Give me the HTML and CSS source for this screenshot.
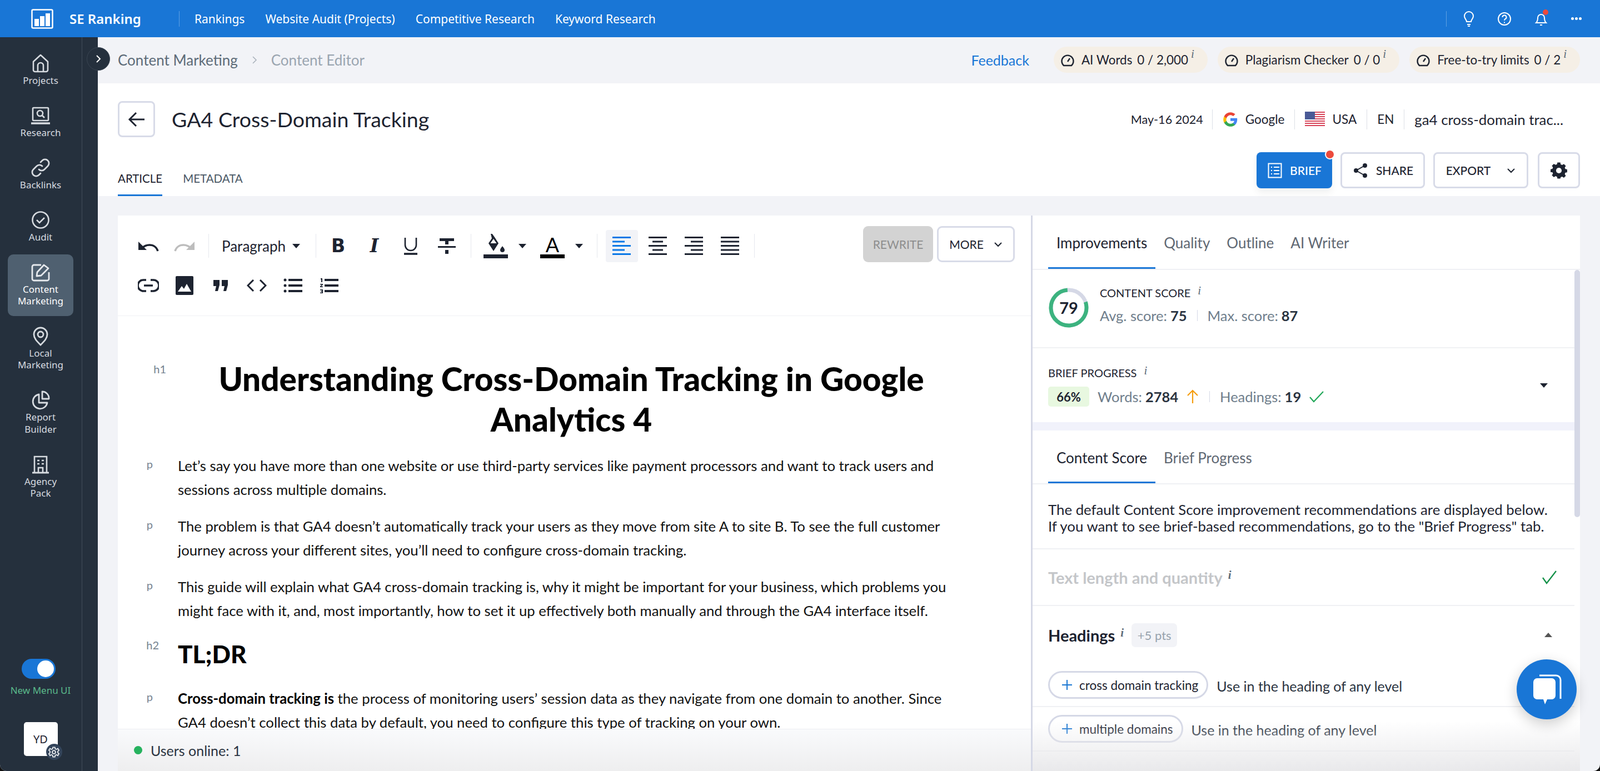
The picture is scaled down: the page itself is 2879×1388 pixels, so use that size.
FILE: index.html
```html
<!DOCTYPE html>
<html>
    <head>
        <title>Content Editor</title>
        <link rel="stylesheet" href="styles.css">
    </head>
    <body>
        <div class="app">

            <header class="topbar">
                <div class="logo">
                    <svg width="40" height="36" viewBox="0 0 40 36"><rect x="1.5" y="1.5" width="37" height="33" rx="2" fill="none" stroke="#fff" stroke-width="2.5"/><rect x="6" y="18" width="8" height="13" fill="#fff"/><rect x="16" y="13" width="8" height="18" fill="#fff"/><rect x="26" y="8" width="8" height="23" fill="#fff"/></svg>
                    <span class="brand">SE Ranking</span>
                </div>
                <nav class="topnav">
                    <a>Rankings</a>
                    <a>Website Audit (Projects)</a>
                    <a>Competitive Research</a>
                    <a>Keyword Research</a>
                </nav>
                <div class="topicons">
                    <svg width="26" height="30" viewBox="0 0 26 30" fill="none" stroke="#fff" stroke-width="2"><path d="M9 20c0-4-4-5-4-10a8 8 0 0 1 16 0c0 5-4 6-4 10z"/><path d="M10 25h6M11 28h4"/></svg>
                    <svg width="30" height="30" viewBox="0 0 30 30" fill="none" stroke="#fff" stroke-width="2"><circle cx="15" cy="15" r="11"/><path d="M11.5 12a3.5 3.5 0 1 1 5 3.2c-1 .6-1.5 1.2-1.5 2.6"/><path d="M15 20.5v2"/></svg>
                    <span class="bell">
                        <svg width="30" height="30" viewBox="0 0 30 30" fill="none" stroke="#fff" stroke-width="2"><path d="M6 22c2-2 3-4 3-9a6 6 0 0 1 12 0c0 5 1 7 3 9z"/><path d="M13 26h4"/></svg>
                    </span>
                    <span class="dots"><i></i><i></i><i></i></span>
                </div>
            </header>

            <div class="shell">
                <aside class="sidebar">
                    <button class="collapse">
                        <svg width="12" height="18" viewBox="0 0 12 18" fill="none" stroke="#fff" stroke-width="2"><path d="M3 3l6 6-6 6"/></svg>
                    </button>
                    <div class="rail">
                        <a class="railitem">
                            <svg width="40" height="40" viewBox="0 0 40 40" fill="none" stroke="#d7dbe0" stroke-width="2.6" stroke-linejoin="round"><path d="M7 17L20 5l13 12v15a3 3 0 0 1-3 3H10a3 3 0 0 1-3-3z"/><path d="M15 35V24a5 5 0 0 1 10 0v11"/></svg>
                            <span>Projects</span>
                        </a>
                        <a class="railitem">
                            <svg width="40" height="40" viewBox="0 0 40 40" fill="none" stroke="#d7dbe0" stroke-width="2.6"><rect x="6" y="6" width="28" height="23" rx="1.5"/><circle cx="19" cy="16" r="5"/><path d="M23 20l4 4"/><path d="M3 34h34" stroke-width="3.4"/></svg>
                            <span>Research</span>
                        </a>
                        <a class="railitem">
                            <svg width="40" height="40" viewBox="0 0 40 40" fill="none" stroke="#d7dbe0" stroke-width="2.8" stroke-linecap="round"><path d="M17 23a7 7 0 0 0 10 0l6-6a7 7 0 0 0-10-10l-3 3"/><path d="M23 17a7 7 0 0 0-10 0l-6 6a7 7 0 0 0 10 10l3-3"/></svg>
                            <span>Backlinks</span>
                        </a>
                        <a class="railitem">
                            <svg width="40" height="40" viewBox="0 0 40 40" fill="none" stroke="#d7dbe0" stroke-width="2.6"><circle cx="20" cy="20" r="14.5"/><path d="M13 20l5 5 9-9"/></svg>
                            <span>Audit</span>
                        </a>
                        <a class="railitem active">
                            <svg width="40" height="40" viewBox="0 0 40 40" fill="none" stroke="#e6e9ed" stroke-width="2.8" stroke-linejoin="round"><path d="M21 7H8a3 3 0 0 0-3 3v22a3 3 0 0 0 3 3h24a3 3 0 0 0 3-3V20"/><path d="M13 27l1-7L26 7l8 6-13 13z"/></svg>
                            <span>Content<br>Marketing</span>
                        </a>
                        <a class="railitem">
                            <svg width="40" height="40" viewBox="0 0 40 40" fill="none" stroke="#d7dbe0" stroke-width="2.8"><path d="M20 36C13 29 8 24 8 17a12 12 0 0 1 24 0c0 7-5 12-12 19z"/><circle cx="20" cy="17" r="5"/></svg>
                            <span>Local<br>Marketing</span>
                        </a>
                        <a class="railitem">
                            <svg width="40" height="40" viewBox="0 0 40 40" fill="none" stroke="#d7dbe0" stroke-width="2.8" stroke-linejoin="round"><path d="M17 10a13 13 0 1 0 15 15H17z"/><path d="M23 5a12 12 0 0 1 12 13H23z"/></svg>
                            <span>Report<br>Builder</span>
                        </a>
                        <a class="railitem">
                            <svg width="40" height="40" viewBox="0 0 40 40" fill="none" stroke="#d7dbe0" stroke-width="2.6"><path d="M9 35V6h22v29"/><path d="M5 35h30" stroke-width="3"/><path d="M16 35v-9h8v9"/><path d="M14 13h4M22 13h4M14 19h4M22 19h4"/></svg>
                            <span>Agency<br>Pack</span>
                        </a>
                    </div>
                    <div class="railbottom">
                        <div class="toggle"><i></i></div>
                        <div class="togglelabel">New Menu UI</div>
                        <div class="avatar">
                            YD
                            <span class="avatargear">
                                <svg width="22" height="22" viewBox="0 0 24 24" fill="none" stroke="#e6e9ed" stroke-width="2"><circle cx="12" cy="12" r="3.2"/><path d="M10 2.5h4l.6 3 2.5 1.1 2.6-1.6 2.2 3.4-2.3 2 .1 2.9 2.2 2-2.2 3.4-2.6-1.6-2.5 1.2-.6 3.1h-4l-.6-3.1-2.5-1.2-2.6 1.6-2.2-3.4 2.2-2 .1-2.9-2.3-2L4.3 5l2.6 1.6 2.5-1.1z"/></svg>
                            </span>
                        </div>
                    </div>
                </aside>

                <main class="main">
                    <div class="subbar">
                        <div class="crumbs">
                            <span class="crumb">Content Marketing</span>
                            <svg width="12" height="18" viewBox="0 0 12 18" fill="none" stroke="#a9b2bb" stroke-width="1.6"><path d="M3 3l6 6-6 6"/></svg>
                            <span class="crumb last">Content Editor</span>
                        </div>
                        <div class="limits">
                            <a class="feedback">Feedback</a>
                            <div class="pill">
                                <svg class="gauge" width="24" height="24" viewBox="0 0 24 24" fill="none" stroke="#1d2330" stroke-width="2.4"><path d="M5 22a10.500 10.500 0 1 1 14 0z"/><path d="M12 15l4-6"/></svg>
                                <span>AI Words</span><span class="nums">0 / 2,000</span><i class="inf">i</i>
                            </div>
                            <div class="pill">
                                <svg class="gauge" width="24" height="24" viewBox="0 0 24 24" fill="none" stroke="#1d2330" stroke-width="2.4"><path d="M5 22a10.500 10.500 0 1 1 14 0z"/><path d="M12 15l4-6"/></svg>
                                <span>Plagiarism Checker</span><span class="nums">0 / 0</span><i class="inf">i</i>
                            </div>
                            <div class="pill">
                                <svg class="gauge" width="24" height="24" viewBox="0 0 24 24" fill="none" stroke="#1d2330" stroke-width="2.4"><path d="M5 22a10.500 10.500 0 1 1 14 0z"/><path d="M12 15l4-6"/></svg>
                                <span>Free-to-try limits</span><span class="nums">0 / 2</span><i class="inf">i</i>
                            </div>
                        </div>
                    </div>

                    <div class="titlecard">
                        <div class="titlerow">
                            <button class="backbtn">
                                <svg width="32" height="30" viewBox="0 0 32 30" fill="none" stroke="#1d2330" stroke-width="3"><path d="M15 3L3 15l12 12M3 15h27"/></svg>
                            </button>
                            <h1 class="doctitle">GA4 Cross-Domain Tracking</h1>
                            <div class="meta">
                                <span class="metaitem date">May-16 2024</span>
                                <span class="metaitem">
                                    <svg width="28" height="28" viewBox="0 0 48 48"><path fill="#4285f4" d="M45 24.5c0-1.6-.1-3.100-.4-4.500H24v8.500h11.800c-.5 2.700-2.100 5-4.400 6.600v5.500h7.100C42.700 36.700 45 31.100 45 24.500z"/><path fill="#34a853" d="M24 46c5.900 0 10.900-2 14.500-5.400l-7.100-5.500c-2 1.300-4.500 2.100-7.400 2.100-5.700 0-10.500-3.800-12.200-9H4.500v5.700C8.100 41 15.500 46 24 46z"/><path fill="#fbbc05" d="M11.800 28.700c-.9-2.700-.9-5.600 0-8.300v-5.700H4.500a22 22 0 0 0 0 19.700z"/><path fill="#ea4335" d="M24 10.700c3.200 0 6.100 1.100 8.400 3.300l6.300-6.300C34.900 4.200 29.900 2 24 2 15.500 2 8.100 7 4.500 14.700l7.300 5.700c1.700-5.200 6.500-9.700 12.200-9.700z"/></svg>
                                    Google
                                </span>
                                <span class="metaitem">
                                    <svg width="36" height="27" viewBox="0 0 36 27"><rect width="36" height="27" fill="#fff"/><path d="M0 1h36M0 5h36M0 9h36M0 13h36M0 17h36M0 21h36M0 25h36" stroke="#d8455a" stroke-width="2"/><rect width="18" height="14" fill="#4a5a96"/></svg>
                                    USA
                                </span>
                                <span class="metaitem">EN</span>
                                <span class="metaitem keyword">ga4 cross-domain trac...</span>
                            </div>
                        </div>
                        <div class="actionrow">
                            <div class="doctabs">
                                <a class="doctab active">ARTICLE</a>
                                <a class="doctab">METADATA</a>
                            </div>
                            <div class="actions">
                                <button class="btn primary">
                                    <svg width="28" height="28" viewBox="0 0 26 28" fill="none" stroke="#fff" stroke-width="2"><rect x="1.500" y="1.500" width="23" height="25"/><path d="M6 8h2M11 8h10M6 14h2M11 14h10M6 20h2M11 20h10"/></svg>
                                    BRIEF
                                    <span class="reddot"></span>
                                </button>
                                <button class="btn share">
                                    <svg width="30" height="30" viewBox="0 0 30 30" fill="#1d2330" stroke="#1d2330" stroke-width="2"><circle cx="23" cy="6" r="3"/><circle cx="7" cy="15" r="3"/><circle cx="23" cy="24" r="3"/><path d="M23 6L7 15l16 9" fill="none"/></svg>
                                    SHARE
                                </button>
                                <button class="btn export">
                                    EXPORT
                                    <svg width="16" height="10" viewBox="0 0 16 10" fill="none" stroke="#1d2330" stroke-width="2"><path d="M2 2l6 6 6-6"/></svg>
                                </button>
                                <button class="btn gearbtn">
                                    <svg width="36" height="36" viewBox="0 0 32 32"><path fill="#1d2330" fill-rule="evenodd" d="M13 2h6l.8 4 3 1.300 3.500-2.200 4 4-2.200 3.400 1.200 3 3.700.7v6l-3.700.8-1.200 3 2.200 3.400-4 4-3.500-2.200-3 1.200L19 35h-6l-.8-3.700-3-1.200-3.500 2.200-4-4 2.200-3.400-1.200-3L-1 22v-6l3.700-.8 1.200-3L1.700 8.800l4-4 3.500 2.200 3-1.200z" transform="translate(3.500 1.500) scale(.78)"/><circle cx="16" cy="16" r="4.500" fill="#fff"/></svg>
                                </button>
                            </div>
                        </div>
                    </div>

                    <div class="workspace">
                        <section class="editor">
                            <div class="toolbar">
                                <div class="toolrow">
                                    <button class="tool"><svg width="38" height="20" viewBox="0 0 38 20" fill="none" stroke="#1d2330" stroke-width="3.400"><path d="M36 19c-2-7-8-11-15-11-5 0-10 2-14 6"/><path d="M1 2v15h15z" fill="#1d2330" stroke="none"/></svg></button>
                                    <button class="tool"><svg width="38" height="20" viewBox="0 0 38 20" fill="none" stroke="#bdbdbd" stroke-width="3.400"><path d="M2 19c2-7 8-11 15-11 5 0 10 2 14 6"/><path d="M37 2v15H22z" fill="#bdbdbd" stroke="none"/></svg></button>
                                    <span class="toolsep"></span>
                                    <button class="formatselect">Paragraph<i class="caret"></i></button>
                                    <span class="toolsep tight"></span>
                                    <button class="tool glyph bold">B</button>
                                    <button class="tool glyph ital">I</button>
                                    <button class="tool"><svg width="26" height="32" viewBox="0 0 26 32" fill="none" stroke="#1d2330"><path d="M3 1v13a10 10 0 0 0 20 0V1" stroke-width="2.600"/><path d="M1 30h24" stroke-width="3.600"/></svg></button>
                                    <button class="tool"><svg width="32" height="32" viewBox="0 0 32 32" fill="#1d2330"><rect x="3" y="2" width="26" height="5"/><rect x="13" y="2" width="6" height="11"/><rect y="16" width="32" height="3"/><rect x="13" y="23" width="6" height="7"/></svg></button>
                                    <span class="toolsep"></span>
                                    <button class="colortool">
                                        <svg width="44" height="44" viewBox="0 0 44 44" fill="#1d2330"><path d="M13 0l2-1 5 7 7 11-9 14-9-14 6-9z"/><path d="M12.500 17l5.500-8 5.500 8z" fill="#fff"/><path d="M34 22c3 4 4 5.500 4 7a4 4 0 0 1-8 0c0-1.500 1-3 4-7z"/><rect y="37" width="44" height="7"/></svg>
                                        <i class="caret"></i>
                                    </button>
                                    <button class="colortool">
                                        <span class="letter">A</span>
                                        <i class="caret"></i>
                                    </button>
                                    <span class="toolsep"></span>
                                    <button class="tool alignon"><svg class="align" viewBox="0 0 33 33" fill="#0a78e6"><path d="M0 0h33v3H0zM0 7.500h22v3H0zM0 15h33v3H0zM0 22.500h22v3H0zM0 30h33v3H0z"/></svg></button>
                                    <button class="tool"><svg class="align" viewBox="0 0 33 33" fill="#1d2330"><path d="M0 0h33v3H0zM7 7.500h19v3H7zM0 15h33v3H0zM7 22.500h19v3H7zM0 30h33v3H0z"/></svg></button>
                                    <button class="tool"><svg class="align" viewBox="0 0 33 33" fill="#1d2330"><path d="M0 0h33v3H0zM11 7.500h22v3H11zM0 15h33v3H0zM11 22.500h22v3H11zM0 30h33v3H0z"/></svg></button>
                                    <button class="tool"><svg class="align" viewBox="0 0 33 33" fill="#1d2330"><path d="M0 0h33v3H0zM0 7.500h33v3H0zM0 15h33v3H0zM0 22.500h33v3H0zM0 30h33v3H0z"/></svg></button>
                                    <span class="toolsep"></span>
                                    <div class="toolright">
                                        <button class="rewrite">REWRITE</button>
                                        <button class="more">MORE <svg width="16" height="10" viewBox="0 0 16 10" fill="none" stroke="#1d2330" stroke-width="2"><path d="M2 2l6 6 6-6"/></svg></button>
                                    </div>
                                </div>
                                <div class="toolrow">
                                    <button class="tool"><svg width="38" height="24" viewBox="0 0 38 24" fill="none" stroke="#1d2330" stroke-width="3.600"><path d="M15 2H10a10 10 0 0 0 0 20h5M23 2h5a10 10 0 0 1 0 20h-5M11 12h16"/></svg></button>
                                    <button class="tool"><svg width="32" height="34" viewBox="0 0 32 34"><rect width="32" height="34" rx="2" fill="#1d2330"/><path d="M4 28l7-10 4 5 5-9 8 14z" fill="#fff"/></svg></button>
                                    <button class="tool"><svg width="28" height="20" viewBox="0 0 28 20" fill="#1d2330"><path d="M1 0h11v9l-3 11H4l2-9H1zM16 0h11v9l-3 11h-5l2-9h-5z"/></svg></button>
                                    <button class="tool"><svg width="36" height="22" viewBox="0 0 36 22" fill="none" stroke="#1d2330" stroke-width="3"><path d="M12 1L2 11l10 10M24 1l10 10-10 10"/></svg></button>
                                    <button class="tool"><svg width="34" height="26" viewBox="0 0 34 26" fill="#1d2330"><circle cx="3" cy="3" r="2.500"/><circle cx="3" cy="13" r="2.500"/><circle cx="3" cy="23" r="2.500"/><path d="M9 1h25v4H9zM9 11h25v4H9zM9 21h25v4H9z"/></svg></button>
                                    <button class="tool"><svg width="34" height="28" viewBox="0 0 34 28" fill="#1d2330"><path d="M9 2h25v4H9zM9 12h25v4H9zM9 22h25v4H9z"/><path d="M2 1h3v7H3V3H2zM1 11h5v1.500l-3 3h3V17H1v-1.500l3-3H1zM1 21h5v7H1v-1.500h3v-1.500H2v-1h2v-1.500H1z"/></svg></button>
                                </div>
                            </div>

                            <div class="doc">
                                <div class="block heading1">
                                    <span class="tag">h1</span>
                                    <h1>Understanding Cross-Domain Tracking in Google Analytics 4</h1>
                                </div>
                                <div class="block para">
                                    <span class="tag">p</span>
                                    <p>Let’s say you have more than one website or use third-party services like payment processors and want to track users and sessions across multiple domains.</p>
                                </div>
                                <div class="block para">
                                    <span class="tag">p</span>
                                    <p>The problem is that GA4 doesn’t automatically track your users as they move from site A to site B. To see the full customer journey across your different sites, you’ll need to configure cross-domain tracking.</p>
                                </div>
                                <div class="block para">
                                    <span class="tag">p</span>
                                    <p>This guide will explain what GA4 cross-domain tracking is, why it might be important for your business, which problems you might face with it, and, most importantly, how to set it up effectively both manually and through the GA4 interface itself.</p>
                                </div>
                                <div class="block heading2">
                                    <span class="tag">h2</span>
                                    <h2>TL;DR</h2>
                                </div>
                                <div class="block para">
                                    <span class="tag">p</span>
                                    <p><b>Cross-domain tracking is</b> the process of monitoring users’ session data as they navigate from one domain to another. Since GA4 doesn’t collect this data by default, you need to configure this type of tracking on your own.</p>
                                </div>
                            </div>

                            <div class="onlinebar"><i class="greendot"></i>Users online: 1</div>
                        </section>

                        <section class="panel">
                            <div class="paneltabs">
                                <a class="ptab active">Improvements</a>
                                <a class="ptab">Quality</a>
                                <a class="ptab">Outline</a>
                                <a class="ptab">AI Writer</a>
                            </div>

                            <div class="panelscroll">
                                <span class="scrollthumb"></span>

                                <div class="scorebox">
                                    <div class="ring">
                                        <svg width="72" height="72" viewBox="0 0 72 72" fill="none" stroke-width="7"><circle cx="36" cy="36" r="32" stroke="#d5d8e6"/><circle cx="36" cy="36" r="32" stroke="#3cb37f" stroke-dasharray="158.800 201.100" transform="rotate(-4 36 36) scale(-1 1) translate(-72 0) rotate(-90 36 36)"/></svg>
                                        <span>79</span>
                                    </div>
                                    <div class="scoretext">
                                        <div class="caps">CONTENT SCORE<i class="inf">i</i></div>
                                        <div class="stats"><span>Avg. score:</span> <b>75</b><u></u><span>Max. score:</span> <b>87</b></div>
                                    </div>
                                </div>

                                <div class="briefbox">
                                    <div class="brieftext">
                                        <div class="caps">BRIEF PROGRESS<i class="inf">i</i></div>
                                        <div class="stats">
                                            <em class="percent">66%</em>
                                            <span>Words:</span> <b>2784</b>
                                            <svg class="statico" width="24" height="26" viewBox="0 0 24 26" fill="none" stroke="#f59d0e" stroke-width="2.200"><path d="M12 25V2M3 11l9-9 9 9"/></svg>
                                            <u></u>
                                            <span>Headings:</span> <b>19</b>
                                            <svg class="statico" width="28" height="22" viewBox="0 0 28 22" fill="none" stroke="#23a85a" stroke-width="2.200"><path d="M2 12l7 8L26 2"/></svg>
                                        </div>
                                    </div>
                                    <i class="caret dark"></i>
                                </div>

                                <div class="panelgap"></div>

                                <div class="subtabs">
                                    <a class="ptab active">Content Score</a>
                                    <a class="ptab">Brief Progress</a>
                                </div>

                                <div class="panelnote">The default Content Score improvement recommendations are displayed below.<br>If you want to see brief-based recommendations, go to the "Brief Progress" tab.</div>

                                <div class="secthead done">
                                    <span class="sectname">Text length and quantity<i class="inf">i</i></span>
                                    <svg width="28" height="26" viewBox="0 0 28 26" fill="none" stroke="#16924a" stroke-width="2.400"><path d="M2 14l7 10L26 2"/></svg>
                                </div>

                                <div class="secthead headings">
                                    <span class="sectname">Headings<i class="inf">i</i></span>
                                    <span class="pts">+5 pts</span>
                                    <i class="caret up"></i>
                                </div>

                                <div class="chiprow first">
                                    <span class="chip"><svg width="18" height="18" viewBox="0 0 18 18" stroke="#1976d2" stroke-width="2"><path d="M9 0v18M0 9h18"/></svg>cross domain tracking</span>
                                    <span class="chipnote">Use in the heading of any level</span>
                                </div>
                                <div class="chiprow">
                                    <span class="chip"><svg width="18" height="18" viewBox="0 0 18 18" stroke="#1976d2" stroke-width="2"><path d="M9 0v18M0 9h18"/></svg>multiple domains</span>
                                    <span class="chipnote">Use in the heading of any level</span>
                                </div>
                                <div class="nextrow"><span class="pts blank"></span></div>
                            </div>

                            <div class="panelfade"></div>
                        </section>
                    </div>
                </main>
            </div>

            <button class="chatbtn">
                <svg width="58" height="58" viewBox="0 0 58 58"><path d="M16 4h30a8 8 0 0 1 8 8v34" fill="none" stroke="#fff" stroke-width="3"/><path d="M12 9h26a7 7 0 0 1 7 7v24a7 7 0 0 1-7 7H30l-4 9-3-9h-11a7 7 0 0 1-7-7V16a7 7 0 0 1 7-7z" fill="#fff"/></svg>
            </button>
        </div>
    </body>
</html>
```

FILE: styles.css
```css
*{
    box-sizing: border-box;
}

body{
    margin: 0;
    background-color: #111;
    font-family: "Lato", sans-serif;
    color: #1d2330;
}

button{
    font-family: inherit;
    background: none;
    border: 0;
    padding: 0;
    color: inherit;
}

.app{
    width: 2879px;
    height: 1388px;
    overflow: hidden;
    position: relative;
    display: flex;
    flex-direction: column;
    background-color: #f2f3f7;
    border-radius: 0 0 12px 12px;
}

/* top blue bar */
.topbar{
    height: 67px;
    flex: none;
    background-color: #1976d6;
    color: #fff;
    display: flex;
    align-items: center;
    padding-left: 56px;
}

.logo{
    width: 267px;
    height: 28px;
    display: flex;
    align-items: center;
    gap: 29px;
    border-right: 1px solid rgba(255,255,255,0.3);
}

.brand{
    font-family: "Noto Sans", sans-serif;
    font-size: 24px;
    font-weight: 600;
}

.topnav{
    display: flex;
    gap: 37px;
    margin-left: 27px;
    font-family: "Noto Sans", sans-serif;
    font-size: 21px;
}

.topicons{
    margin-left: auto;
    height: 28px;
    width: 277px;
    padding-left: 27px;
    border-left: 1px solid rgba(255,255,255,0.3);
    display: flex;
    align-items: center;
    gap: 36px;
}

.bell{
    position: relative;
    display: flex;
}

.bell::after{
    content: "";
    position: absolute;
    width: 10px;
    height: 10px;
    border-radius: 50%;
    background-color: #ec4a3c;
    right: 2px;
    top: -2px;
}

.dots{
    display: flex;
    gap: 2px;
    margin-left: 3px;
}

.dots i{
    width: 5px;
    height: 5px;
    border-radius: 50%;
    background-color: #fff;
}

/* shell */
.shell{
    flex: 1;
    display: flex;
    min-height: 0;
}

.sidebar{
    width: 176px;
    flex: none;
    background-color: #25303d;
    position: relative;
    display: flex;
    flex-direction: column;
    z-index: 2;
}

.sidebar::after{
    content: "";
    position: absolute;
    left: 147px;
    top: 0;
    bottom: 0;
    width: 1px;
    background-color: #414c59;
}

.collapse{
    position: absolute;
    left: 156px;
    top: 18px;
    width: 42px;
    height: 42px;
    border-radius: 50%;
    background-color: #25303d;
    border: 1px solid #3a4552;
    display: flex;
    align-items: center;
    justify-content: center;
    z-index: 3;
}

.rail{
    width: 146px;
    padding: 15px 14px 0;
    display: flex;
    flex-direction: column;
    gap: 4.400px;
}

.railitem{
    display: flex;
    flex-direction: column;
    align-items: center;
    padding: 12px 0 16px;
    border-radius: 10px;
    color: #d7dbe0;
    font-family: "Noto Sans", sans-serif;
    font-size: 17px;
    line-height: 21.500px;
    text-align: center;
}

.railitem.active{
    background-color: #4f6070;
    color: #fff;
}

.railbottom{
    margin-top: auto;
    width: 146px;
    display: flex;
    flex-direction: column;
    align-items: center;
    padding-bottom: 27px;
}

.toggle{
    width: 61px;
    height: 36px;
    border-radius: 18px;
    background-color: #1976d6;
    padding: 3px;
    display: flex;
    justify-content: flex-end;
    margin-left: -8px;
}

.toggle i{
    width: 30px;
    height: 30px;
    border-radius: 50%;
    background-color: #fff;
}

.togglelabel{
    margin-top: 9px;
    color: #5ab98a;
    font-family: "Noto Sans", sans-serif;
    font-size: 17px;
}

.avatar{
    position: relative;
    margin-top: 46px;
    width: 61px;
    height: 61px;
    border-radius: 5px;
    background-color: #fff;
    font-family: "Noto Sans", sans-serif;
    font-size: 20px;
    display: flex;
    align-items: center;
    justify-content: center;
}

.avatargear{
    position: absolute;
    right: -8px;
    bottom: -7px;
    width: 29px;
    height: 29px;
    border-radius: 50%;
    background-color: #33445a;
    display: flex;
    align-items: center;
    justify-content: center;
}

/* main column */
.main{
    flex: 1;
    min-width: 0;
    display: flex;
    flex-direction: column;
}

.subbar{
    height: 83px;
    flex: none;
    display: flex;
    align-items: center;
    justify-content: space-between;
    padding: 0 36px 0 36px;
}

.crumbs{
    display: flex;
    align-items: center;
    gap: 24px;
    margin-top: -1px;
}

.crumb{
    font-size: 26px;
    color: #5d6b78;
}

.crumb.last{
    color: #9aa5b0;
}

.limits{
    display: flex;
    align-items: center;
    gap: 18px;
    margin-top: -2px;
}

.feedback{
    color: #1976d6;
    font-size: 25px;
    margin-right: 26px;
}

.pill{
    height: 47px;
    border-radius: 24px;
    background-color: #f5efe6;
    display: flex;
    align-items: center;
    padding: 0 24px 0 13px;
    font-size: 22.400px;
}

.gauge{
    margin-right: 13px;
}

.nums{
    margin-left: 9px;
}

.inf{
    font-family: "Liberation Serif", serif;
    font-style: italic;
    font-size: 21px;
    color: #5d6b78;
    margin-left: 5px;
    align-self: flex-start;
    line-height: 1;
    position: relative;
    top: 3px;
}

/* title card */
.titlecard{
    height: 203px;
    flex: none;
    background-color: #fff;
    padding: 32px 36px 0;
}

.titlerow{
    height: 65px;
    display: flex;
    align-items: center;
}

.backbtn{
    width: 67px;
    height: 65px;
    border: 3px solid #d8dbe8;
    border-radius: 8px;
    display: flex;
    align-items: center;
    justify-content: center;
}

.doctitle{
    margin: 0 0 0 30px;
    font-size: 37.500px;
    font-weight: 400;
}

.meta{
    margin-left: auto;
    display: flex;
    align-items: center;
    font-size: 22.500px;
    padding-right: 30px;
}

.metaitem{
    height: 36px;
    display: flex;
    align-items: center;
    gap: 13px;
    padding: 0 18px;
    border-left: 1px solid #dcdfe6;
}

.metaitem.date{
    border-left: 0;
    font-size: 21.600px;
    padding-right: 16px;
}

.metaitem.keyword{
    font-size: 25.800px;
    padding-right: 0;
}

.actionrow{
    margin-top: 27px;
    height: 79px;
    display: flex;
    justify-content: space-between;
}

.doctabs{
    display: flex;
    gap: 37px;
    align-items: flex-end;
}

.doctab{
    height: 79px;
    padding-top: 35px;
    font-size: 20.500px;
    color: #4a5866;
    border-bottom: 3px solid transparent;
}

.doctab.active{
    color: #1d2330;
    border-bottom-color: #1976d6;
}

.actions{
    display: flex;
    gap: 15px;
}

.btn{
    height: 65px;
    border: 3px solid #d8dbe8;
    border-radius: 8px;
    display: flex;
    align-items: center;
    justify-content: center;
    gap: 13px;
    font-size: 21px;
    font-weight: 500;
    position: relative;
}

.btn.primary{
    width: 136px;
    background-color: #1976d6;
    border: 0;
    color: #fff;
    box-shadow: 0 8px 14px rgba(0,0,0,0.06);
}

.btn.share{
    width: 152px;
}

.btn.export{
    width: 171px;
    gap: 29px;
}

.btn.gearbtn{
    width: 76px;
    margin-left: 2px;
}

.reddot{
    position: absolute;
    right: -5px;
    top: -5px;
    width: 18px;
    height: 18px;
    border-radius: 50%;
    background-color: #ec4a3c;
    border: 2px solid #fff;
}

/* editor + panel */
.workspace{
    flex: 1;
    min-height: 0;
    margin: 35px 36px 0;
    display: flex;
    background-color: #fff;
}

.editor{
    width: 1643px;
    flex: none;
    position: relative;
    overflow: hidden;
    display: flex;
    flex-direction: column;
}

.toolbar{
    height: 181px;
    flex: none;
    padding: 19px 29px 0 22px;
    border-bottom: 1px solid #f0f1f4;
}

.toolrow{
    height: 71px;
    display: flex;
    align-items: center;
}

.tool{
    width: 65px;
    height: 58px;
    flex: none;
    display: flex;
    align-items: center;
    justify-content: center;
    border-radius: 4px;
}

.glyph{
    font-size: 33px;
}

.bold{
    font-family: "DejaVu Sans", sans-serif;
    font-weight: 700;
}

.ital{
    font-family: "DejaVu Serif", serif;
    font-weight: 700;
    font-style: italic;
}

.tool.alignon{
    width: 58px;
    margin: 0 3.500px;
    background-color: #f2f3f7;
}

.align{
    width: 33px;
    height: 33px;
}

.toolsep{
    width: 1px;
    height: 43px;
    background-color: #e6e8ee;
    margin: 0 11px;
    flex: none;
}

.toolsep.tight{
    margin-right: 7px;
}

.formatselect{
    width: 170px;
    padding-left: 12px;
    font-size: 26px;
    display: flex;
    align-items: center;
    gap: 12px;
}

.caret{
    display: inline-block;
    width: 0;
    height: 0;
    border-left: 7px solid transparent;
    border-right: 7px solid transparent;
    border-top: 8px solid #1d2330;
    flex: none;
}

.caret.up{
    border-top: 0;
    border-bottom: 8px solid #555;
}

.colortool{
    width: 102px;
    display: flex;
    align-items: center;
    gap: 19px;
    padding-left: 11px;
    flex: none;
}

.letter{
    width: 44px;
    height: 44px;
    border-bottom: 7px solid #000;
    font-size: 36px;
    line-height: 38px;
    text-align: center;
    color: #000;
}

.toolright{
    margin-left: auto;
    display: flex;
    gap: 7px;
    margin-top: -6px;
}

.rewrite{
    width: 126px;
    height: 65px;
    border-radius: 9px;
    background-color: #d3d3d3;
    color: #8d8d8d;
    font-size: 21px;
}

.more{
    width: 140px;
    height: 65px;
    border: 3px solid #d8dbe8;
    border-radius: 9px;
    font-size: 21px;
    display: flex;
    align-items: center;
    justify-content: center;
    gap: 18px;
}

.doc{
    padding: 0 119px 0 0;
    color: #111;
}

.block{
    display: flex;
    align-items: flex-start;
}

.tag{
    width: 108px;
    flex: none;
    text-align: right;
    padding-right: 45px;
    color: #75838f;
    font-size: 20px;
}

.block p{
    margin: 0;
    font-size: 25.700px;
    line-height: 43px;
}

.block h1{
    margin: 0;
    flex: 1;
    font-size: 58.500px;
    line-height: 73px;
    font-weight: 900;
    text-align: center;
    color: #000;
}

.block h2{
    margin: 0;
    font-size: 44px;
    line-height: 56px;
    font-weight: 900;
    color: #000;
}

.block b{
    color: #000;
}

.heading1{
    margin-top: 76px;
}

.heading1 .tag{
    padding: 7px 21px 0 0;
}

.para{
    margin-top: 23px;
}

.para .tag{
    padding-top: 6px;
}

.heading1 + .para{
    margin-top: 26px;
}

.heading2{
    margin-top: 27.500px;
}

.heading2 .tag{
    padding: 0 34px 0 0;
}

.heading2 + .para{
    margin-top: 31px;
}

.onlinebar{
    position: absolute;
    left: 0;
    right: 0;
    bottom: 0;
    height: 76px;
    padding-left: 29px;
    display: flex;
    align-items: center;
    font-size: 25px;
    color: #2a3340;
    border-top: 1px solid #eceef2;
    background: linear-gradient(#f9fafc, #eeeeef);
}

.greendot{
    width: 15px;
    height: 15px;
    border-radius: 50%;
    background-color: #26b25e;
    margin-right: 15px;
}

/* right panel */
.panel{
    flex: 1;
    position: relative;
    overflow: hidden;
    border-left: 3px solid #d5d8e6;
}

.paneltabs{
    height: 98px;
    display: flex;
    padding-left: 28px;
    border-bottom: 2px solid #eff0f4;
}

.subtabs{
    height: 97px;
    display: flex;
    padding-left: 28px;
    border-bottom: 2px solid #eff0f4;
}

.ptab{
    height: 100%;
    padding: 33px 15px 0;
    font-size: 26px;
    color: #5f6873;
}

.ptab.active{
    color: #1d2330;
    border-bottom: 3px solid #1976d6;
}

.panelscroll{
    position: relative;
    height: 900px;
    padding-right: 10px;
}

.scrollthumb{
    position: absolute;
    right: 0;
    top: 0;
    width: 10px;
    height: 445px;
    border-radius: 5px;
    background-color: #d5d8e6;
}

.scorebox{
    height: 141px;
    border-bottom: 2px solid #f0f1f4;
    display: flex;
    align-items: center;
    gap: 20px;
    padding-left: 29px;
}

.scoretext{
    margin-top: -13px;
}

.ring{
    position: relative;
    width: 72px;
    height: 72px;
    margin-top: -4px;
}

.ring span{
    position: absolute;
    inset: 0;
    display: flex;
    align-items: center;
    justify-content: center;
    font-size: 29px;
    font-weight: 700;
}

.caps{
    font-size: 20px;
    display: flex;
    margin-bottom: 14px;
}

.caps .inf{
    margin-left: 13px;
    top: -2px;
}

.stats{
    display: flex;
    align-items: center;
    font-size: 25.500px;
    gap: 6px;
    white-space: pre;
}

.stats span{
    color: #6f7e8c;
}

.stats b{
    font-weight: 700;
    color: #2a3340;
}

.stats u{
    width: 1px;
    height: 20px;
    background-color: #d5d8e6;
    margin: 0 12px;
}

.briefbox{
    height: 133px;
    display: flex;
    align-items: center;
    justify-content: space-between;
    padding: 0 48px 0 28px;
}

.brieftext{
    margin-top: 4px;
}

.briefbox .caps{
    margin-bottom: 13px;
}

.percent{
    font-style: normal;
    font-weight: 700;
    font-size: 22px;
    width: 74px;
    height: 36px;
    border-radius: 5px;
    background-color: #e8f8e0;
    display: flex;
    align-items: center;
    justify-content: center;
    margin-right: 9px;
}

.statico{
    margin-left: 8px;
}

.panelgap{
    height: 15px;
    background-color: #f1f2fb;
}

.panelnote{
    height: 117px;
    padding: 30px 0 0 28px;
    font-size: 25.800px;
    line-height: 30px;
    white-space: nowrap;
    border-bottom: 2px solid #eff0f4;
}

.secthead{
    display: flex;
    align-items: center;
    padding: 0 31px 0 28px;
}

.secthead.done{
    height: 102px;
    justify-content: space-between;
    border-bottom: 2px solid #eff0f4;
}

.secthead.headings{
    height: 104px;
    gap: 14px;
}

.secthead.headings .caret{
    margin-left: auto;
    margin-right: 9px;
}

.sectname{
    font-size: 29px;
    font-weight: 700;
    display: flex;
}

.sectname .inf{
    margin-left: 10px;
}

.done .sectname{
    color: #c4c6c9;
}

.pts{
    width: 82px;
    height: 43px;
    border-radius: 7px;
    background-color: #f2f3f7;
    color: #97a2ad;
    font-size: 22px;
    display: flex;
    align-items: center;
    justify-content: center;
}

.chiprow{
    height: 80px;
    display: flex;
    align-items: center;
    gap: 15px;
    padding-left: 28px;
    border-bottom: 2px solid #eff0f4;
}

.chiprow.first{
    height: 78px;
}

.chip{
    height: 50px;
    border: 3px solid #d5d8e6;
    border-radius: 25px;
    padding: 0 15px 0 22px;
    display: flex;
    align-items: center;
    gap: 13px;
    font-size: 22.500px;
}

.chipnote{
    font-size: 25px;
    color: #2a3340;
    padding-top: 3px;
}

.nextrow{
    padding: 30px 0 0 226px;
}

.pts.blank{
    width: 90px;
}

.panelfade{
    position: absolute;
    left: 0;
    right: 0;
    bottom: 0;
    height: 90px;
    background: linear-gradient(rgba(236,236,238,0), #e9e9eb);
}

.chatbtn{
    position: absolute;
    left: 2729px;
    top: 1187px;
    width: 108px;
    height: 108px;
    border-radius: 50%;
    background-color: #1976d6;
    box-shadow: 0 8px 24px rgba(0,0,0,0.2);
    display: flex;
    align-items: center;
    justify-content: center;
}
```
